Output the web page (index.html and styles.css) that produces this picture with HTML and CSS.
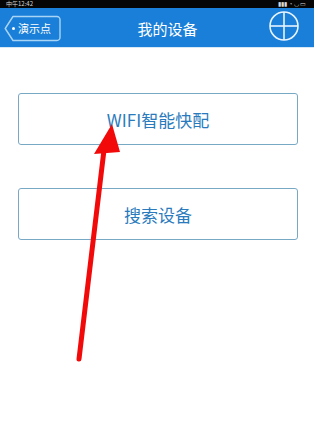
FILE: index.html
```html
<!DOCTYPE html>
<html lang="zh">
<head>
<meta charset="utf-8">
<title>我的设备</title>
<link rel="stylesheet" href="styles.css">
</head>
<body>
<div class="screen">
  <div class="status">
    <span class="time">中午12:42</span>
    <span class="sys">▮▮▮ ◔ ◡ ▭</span>
  </div>
  <div class="nav">
    <div class="back">
      <svg class="back-shape" width="57" height="27" viewBox="0 0 57 27">
        <path d="M9 1.5 H53 a3 3 0 0 1 3 3 V22.5 a3 3 0 0 1 -3 3 H9 L1.2 13.5 Z" fill="none" stroke="#a8d4f6" stroke-width="1.4" stroke-linejoin="round"/>
      </svg>
      <span class="dot"></span>
      <span class="back-text">演示点</span>
    </div>
    <div class="title">我的设备</div>
    <svg class="plus" width="32" height="32" viewBox="0 0 32 32">
      <circle cx="16" cy="16" r="14" fill="none" stroke="#e8f4ff" stroke-width="1.6"/>
      <line x1="16" y1="2" x2="16" y2="30" stroke="#e8f4ff" stroke-width="1.6"/>
      <line x1="2" y1="16" x2="30" y2="16" stroke="#e8f4ff" stroke-width="1.6"/>
    </svg>
  </div>
  <div class="content">
    <div class="btn">WIFI智能快配</div>
    <div class="btn">搜索设备</div>
  </div>
  <svg class="arrow" width="320" height="433" viewBox="0 0 320 433">
    <line x1="79" y1="359" x2="104" y2="150" stroke="#f20a0a" stroke-width="5" stroke-linecap="round"/>
    <polygon points="112,124 94,154 120,152" fill="#f20a0a"/>
  </svg>
</div>
</body>
</html>
```
FILE: styles.css
```css
html, body {
  margin: 0;
  padding: 0;
  background: #ffffff;
}
body {
  width: 320px;
  height: 433px;
  overflow: hidden;
  font-family: "Noto Sans CJK SC", "Noto Sans", sans-serif;
}
.screen {
  position: relative;
  width: 314px;
  height: 433px;
  background: #ffffff;
}
.status {
  height: 8px;
  background: #050505;
  display: flex;
  justify-content: space-between;
  align-items: center;
  padding: 0 8px 0 6px;
  color: #d8d8d8;
  font-size: 6px;
  line-height: 8px;
}
.nav {
  height: 39px;
  background: #1a7fd8;
  display: flex;
  align-items: center;
  justify-content: space-between;
  padding: 0 14px 0 4px;
  border-bottom: 1px solid #d6e8f6;
}
.back {
  position: relative;
  width: 57px;
  height: 27px;
  display: flex;
  align-items: center;
  margin-top: 1px;
}
.back-shape {
  position: absolute;
  left: 0;
  top: 0;
}
.dot {
  width: 3px;
  height: 3px;
  border-radius: 50%;
  background: #ffffff;
  margin-left: 8px;
}
.back-text {
  color: #ffffff;
  font-size: 11px;
  margin-left: 3px;
}
.title {
  color: #ffffff;
  font-size: 15px;
  margin-left: 6px;
  margin-top: 1px;
}
.plus {
  margin-top: -3px;
}
.content {
  display: flex;
  flex-direction: column;
  gap: 43px;
  padding: 45px 16px 0 18px;
}
.btn {
  height: 50px;
  border: 1px solid #78a9c4;
  border-radius: 3px;
  display: flex;
  align-items: center;
  justify-content: center;
  color: #2a7bbd;
  font-size: 17px;
}
.arrow {
  position: absolute;
  left: 0;
  top: 0;
  pointer-events: none;
}
```
